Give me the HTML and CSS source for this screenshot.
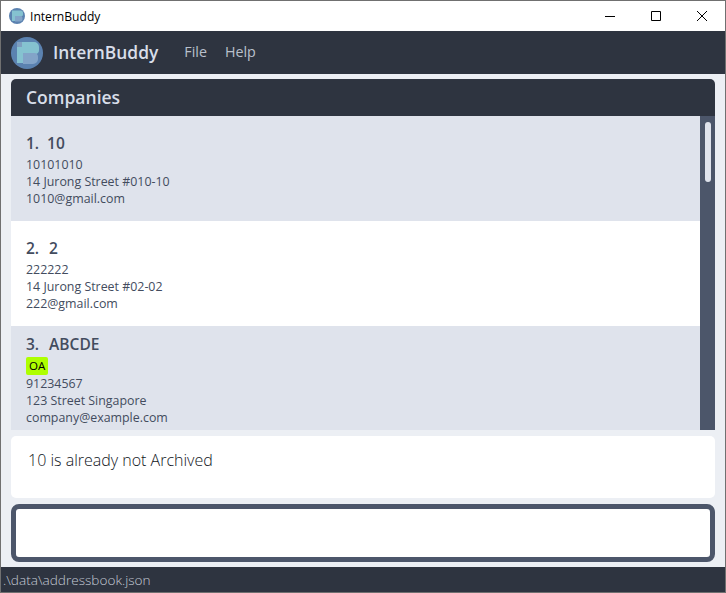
FILE: index.html
```html
<!DOCTYPE html>
<html lang="en">
<head>
<meta charset="utf-8">
<title>InternBuddy</title>
<link rel="stylesheet" href="styles.css">
</head>
<body>
<div class="window">
  <header class="titlebar">
    <svg class="title-icon" width="16" height="16" viewBox="0 0 32 32">
      <circle cx="16" cy="16" r="16" fill="#5b82b0"/>
      <path d="M6 5h17a5 5 0 0 1 5 5v3a4 4 0 0 1-3 4H12v9H6z" fill="#85c2d0"/>
      <path d="M12 16h12a4 4 0 0 1 3 4v2a5 5 0 0 1-5 5H12z" fill="#83a4c8"/>
    </svg>
    <span class="title-text">InternBuddy</span>
    <div class="controls">
      <svg class="ctl" width="46" height="30" viewBox="0 0 46 30"><path d="M18 15.5h10" stroke="#000" fill="none"/></svg>
      <svg class="ctl" width="46" height="30" viewBox="0 0 46 30"><path d="M18.5 10.5h9v9h-9z" stroke="#000" fill="none"/></svg>
      <svg class="ctl" width="46" height="30" viewBox="0 0 46 30"><path d="M18 10l10 10M28 10L18 20" stroke="#000" fill="none"/></svg>
    </div>
  </header>
  <nav class="menubar">
    <svg class="logo" width="32" height="32" viewBox="0 0 32 32">
      <circle cx="16" cy="16" r="16" fill="#5b82b0"/>
      <path d="M6 5h17a5 5 0 0 1 5 5v3a4 4 0 0 1-3 4H12v9H6z" fill="#85c2d0"/>
      <path d="M6 5h5v5H6z" fill="#7f9fc0"/>
      <path d="M12 16h12a4 4 0 0 1 3 4v2a5 5 0 0 1-5 5H12z" fill="#83a4c8"/>
    </svg>
    <span class="brand">InternBuddy</span>
    <span class="menu-item file">File</span>
    <span class="menu-item">Help</span>
  </nav>
  <main class="content">
    <section class="panel">
      <h1 class="panel-title">Companies</h1>
      <div class="list-wrap">
        <div class="list">
          <article class="row row-shaded">
            <div class="name"><span class="idx idx-narrow">1.</span>10</div>
            <div class="line">10101010</div>
            <div class="line">14 Jurong Street #010-10</div>
            <div class="line">1010@gmail.com</div>
          </article>
          <article class="row row-white">
            <div class="name"><span class="idx">2.</span>2</div>
            <div class="line">222222</div>
            <div class="line">14 Jurong Street #02-02</div>
            <div class="line">222@gmail.com</div>
          </article>
          <article class="row row-shaded row-tagged">
            <div class="name"><span class="idx">3.</span>ABCDE</div>
            <div class="tags"><span class="tag">OA</span></div>
            <div class="line">91234567</div>
            <div class="line">123 Street Singapore</div>
            <div class="line">company@example.com</div>
          </article>
        </div>
        <div class="scrollbar"><div class="thumb"></div></div>
      </div>
    </section>
    <section class="result">10 is already not Archived</section>
    <section class="command"><input class="command-input" type="text" aria-label="Command"></section>
  </main>
  <footer class="status">.\data\addressbook.json</footer>
</div>
</body>
</html>
```
FILE: styles.css
```css
* { box-sizing: border-box; }
html, body { margin: 0; padding: 0; height: 593px; overflow: hidden; }
body { font-family: "Open Sans", "Noto Sans", sans-serif; }
.window {
  height: 593px;
  display: flex;
  flex-direction: column;
  border: 1px solid #707070;
  background: #eceff4;
}
.titlebar {
  height: 30px;
  flex: none;
  display: flex;
  align-items: center;
  background: #fff;
  padding-left: 8px;
}
.title-icon { flex: none; }
.title-text { margin-left: 5px; font-size: 12.1px; color: #000; }
.controls { margin-left: auto; display: flex; }
.ctl { display: block; }
.menubar {
  height: 43px;
  flex: none;
  display: flex;
  align-items: center;
  background: #2e3440;
  padding: 0 0 2px 10px;
}
.logo { flex: none; margin-top: 2px; }
.brand { margin-left: 10px; font-size: 17.4px; font-weight: 600; color: #d8dee9; }
.menu-item { font-size: 14.3px; color: #b9c0cc; margin-left: 18px; }
.menu-item.file { margin-left: 26px; }
.content {
  flex: 1;
  min-height: 0;
  display: flex;
  flex-direction: column;
  padding: 5px 10px 5px;
}
.panel { height: 351px; flex: none; display: flex; flex-direction: column; }
.panel-title {
  margin: 0;
  height: 37px;
  flex: none;
  display: flex;
  align-items: center;
  padding: 0 0 2px 15px;
  background: #2e3440;
  border-radius: 5px 5px 0 0;
  font-size: 17.5px;
  font-weight: 600;
  color: #d8dee9;
}
.list-wrap { flex: 1; min-height: 0; display: flex; }
.list { flex: 1; min-width: 0; overflow: hidden; }
.scrollbar { width: 15px; flex: none; background: #4c566a; padding: 6px 4px 0 5px; }
.thumb { height: 60px; background: #dfe3ec; border-radius: 3px; }
.row { height: 105px; padding: 17px 15px 0; color: #434c5e; font-size: 12.4px; line-height: 17px; }
.row-tagged { height: 104px; padding-top: 8px; }
.row-shaded { background: #dfe3ec; }
.row-white { background: #fff; }
.name { font-size: 15.5px; font-weight: 600; line-height: 20px; margin-bottom: 3px; white-space: pre; }
.row-tagged .name { margin-bottom: 3px; }
.idx { margin-right: 10px; }
.idx-narrow { margin-right: 8px; }
.tags { display: flex; height: 18px; }
.tag {
  background: #aeff00;
  color: #000;
  font-size: 11.5px;
  line-height: 18px;
  padding: 0 3px;
  border-radius: 2px;
}
.result {
  margin-top: 6px;
  height: 62px;
  flex: none;
  background: #fff;
  border-radius: 5px;
  padding: 13px 17px;
  font-size: 16px;
  font-weight: 300;
  line-height: 22px;
  color: #11151c;
}
.command {
  margin-top: 6px;
  height: 58px;
  flex: none;
  background: #fff;
  border: 5px solid #4c566a;
  border-radius: 8px;
}
.command-input {
  display: block;
  width: 100%;
  height: 100%;
  border: 0;
  outline: 0;
  background: transparent;
  padding: 0 10px;
}
.status {
  height: 25px;
  flex: none;
  background: #2e3440;
  color: #c4cad5;
  font-size: 13.6px;
  font-weight: 300;
  line-height: 25px;
  padding-left: 2px;
}
```
